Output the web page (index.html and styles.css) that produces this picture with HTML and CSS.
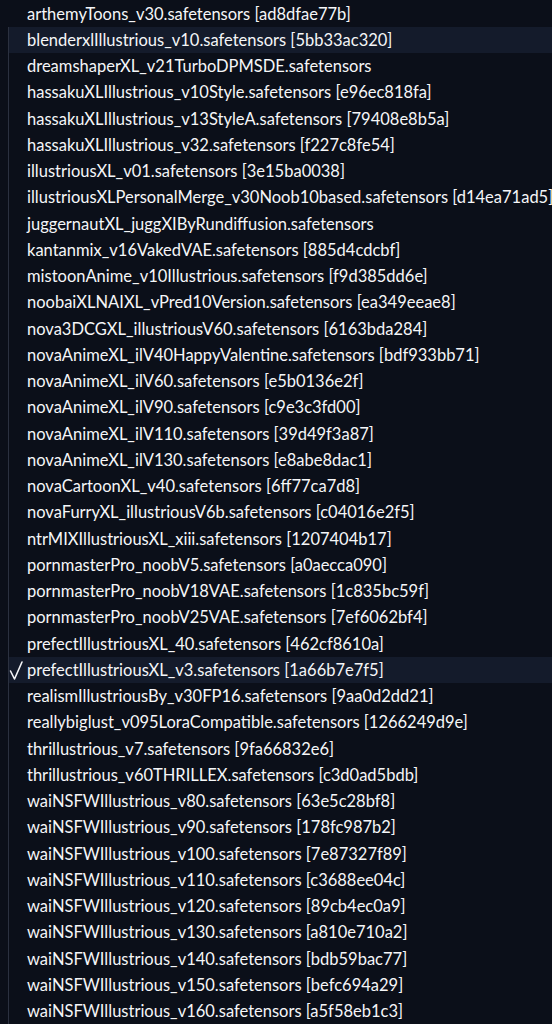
FILE: index.html
```html
<!DOCTYPE html>
<html>
<head>
<meta charset="utf-8">
<link rel="stylesheet" href="styles.css">
</head>
<body>
<ul class="options">
<li class="opt"><span class="check"></span><span class="label">arthemyToons_v30.safetensors [ad8dfae77b]</span></li>
<li class="opt active"><span class="check"></span><span class="label">blenderxlIllustrious_v10.safetensors [5bb33ac320]</span></li>
<li class="opt"><span class="check"></span><span class="label">dreamshaperXL_v21TurboDPMSDE.safetensors</span></li>
<li class="opt"><span class="check"></span><span class="label">hassakuXLIllustrious_v10Style.safetensors [e96ec818fa]</span></li>
<li class="opt"><span class="check"></span><span class="label">hassakuXLIllustrious_v13StyleA.safetensors [79408e8b5a]</span></li>
<li class="opt"><span class="check"></span><span class="label">hassakuXLIllustrious_v32.safetensors [f227c8fe54]</span></li>
<li class="opt"><span class="check"></span><span class="label">illustriousXL_v01.safetensors [3e15ba0038]</span></li>
<li class="opt"><span class="check"></span><span class="label">illustriousXLPersonalMerge_v30Noob10based.safetensors [d14ea71ad5]</span></li>
<li class="opt"><span class="check"></span><span class="label">juggernautXL_juggXIByRundiffusion.safetensors</span></li>
<li class="opt"><span class="check"></span><span class="label">kantanmix_v16VakedVAE.safetensors [885d4cdcbf]</span></li>
<li class="opt"><span class="check"></span><span class="label">mistoonAnime_v10Illustrious.safetensors [f9d385dd6e]</span></li>
<li class="opt"><span class="check"></span><span class="label">noobaiXLNAIXL_vPred10Version.safetensors [ea349eeae8]</span></li>
<li class="opt"><span class="check"></span><span class="label">nova3DCGXL_illustriousV60.safetensors [6163bda284]</span></li>
<li class="opt"><span class="check"></span><span class="label">novaAnimeXL_ilV40HappyValentine.safetensors [bdf933bb71]</span></li>
<li class="opt"><span class="check"></span><span class="label">novaAnimeXL_ilV60.safetensors [e5b0136e2f]</span></li>
<li class="opt"><span class="check"></span><span class="label">novaAnimeXL_ilV90.safetensors [c9e3c3fd00]</span></li>
<li class="opt"><span class="check"></span><span class="label">novaAnimeXL_ilV110.safetensors [39d49f3a87]</span></li>
<li class="opt"><span class="check"></span><span class="label">novaAnimeXL_ilV130.safetensors [e8abe8dac1]</span></li>
<li class="opt"><span class="check"></span><span class="label">novaCartoonXL_v40.safetensors [6ff77ca7d8]</span></li>
<li class="opt"><span class="check"></span><span class="label">novaFurryXL_illustriousV6b.safetensors [c04016e2f5]</span></li>
<li class="opt"><span class="check"></span><span class="label">ntrMIXIllustriousXL_xiii.safetensors [1207404b17]</span></li>
<li class="opt"><span class="check"></span><span class="label">pornmasterPro_noobV5.safetensors [a0aecca090]</span></li>
<li class="opt"><span class="check"></span><span class="label">pornmasterPro_noobV18VAE.safetensors [1c835bc59f]</span></li>
<li class="opt"><span class="check"></span><span class="label">pornmasterPro_noobV25VAE.safetensors [7ef6062bf4]</span></li>
<li class="opt"><span class="check"></span><span class="label">prefectIllustriousXL_40.safetensors [462cf8610a]</span></li>
<li class="opt active"><span class="check"><svg class="tick" viewBox="0 0 18 26" width="18" height="26"><polyline points="1.5,14 5.5,22 13,5" fill="none" stroke="#f3f4f6" stroke-width="1.6" stroke-linecap="round" stroke-linejoin="round"/></svg></span><span class="label">prefectIllustriousXL_v3.safetensors [1a66b7e7f5]</span></li>
<li class="opt"><span class="check"></span><span class="label">realismIllustriousBy_v30FP16.safetensors [9aa0d2dd21]</span></li>
<li class="opt"><span class="check"></span><span class="label">reallybiglust_v095LoraCompatible.safetensors [1266249d9e]</span></li>
<li class="opt"><span class="check"></span><span class="label">thrillustrious_v7.safetensors [9fa66832e6]</span></li>
<li class="opt"><span class="check"></span><span class="label">thrillustrious_v60THRILLEX.safetensors [c3d0ad5bdb]</span></li>
<li class="opt"><span class="check"></span><span class="label">waiNSFWIllustrious_v80.safetensors [63e5c28bf8]</span></li>
<li class="opt"><span class="check"></span><span class="label">waiNSFWIllustrious_v90.safetensors [178fc987b2]</span></li>
<li class="opt"><span class="check"></span><span class="label">waiNSFWIllustrious_v100.safetensors [7e87327f89]</span></li>
<li class="opt"><span class="check"></span><span class="label">waiNSFWIllustrious_v110.safetensors [c3688ee04c]</span></li>
<li class="opt"><span class="check"></span><span class="label">waiNSFWIllustrious_v120.safetensors [89cb4ec0a9]</span></li>
<li class="opt"><span class="check"></span><span class="label">waiNSFWIllustrious_v130.safetensors [a810e710a2]</span></li>
<li class="opt"><span class="check"></span><span class="label">waiNSFWIllustrious_v140.safetensors [bdb59bac77]</span></li>
<li class="opt"><span class="check"></span><span class="label">waiNSFWIllustrious_v150.safetensors [befc694a29]</span></li>
<li class="opt"><span class="check"></span><span class="label">waiNSFWIllustrious_v160.safetensors [a5f58eb1c3]</span></li>
</ul>
</body>
</html>
```
FILE: styles.css
```css
html, body {
  margin: 0;
  padding: 0;
  background: #0b0f19;
  overflow: hidden;
}
.options {
  list-style: none;
  margin: 0;
  padding: 0.75px 0 0 8px;
  font-family: Lato, "Noto Sans", sans-serif;
  font-size: 16.5px;
  color: #f5f6f8;
}
.opt {
  display: flex;
  align-items: center;
  height: 26.25px;
  border-left: 1px solid transparent;
  white-space: nowrap;
}
.opt + .opt {
  border-left-color: #2b3140;
}
.opt.active {
  background: #141b2b;
}
.check {
  flex: 0 0 18px;
  height: 26px;
  display: flex;
  align-items: center;
}
.tick {
  display: block;
}
.label {
  line-height: 1;
}
```
